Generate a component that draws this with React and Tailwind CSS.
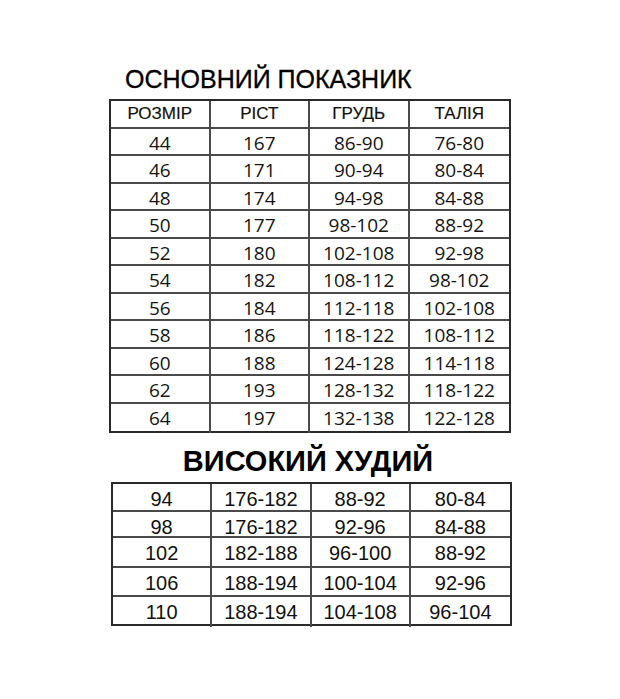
import React from "react";

const mainRows = [
  ["44", "167", "86-90", "76-80"],
  ["46", "171", "90-94", "80-84"],
  ["48", "174", "94-98", "84-88"],
  ["50", "177", "98-102", "88-92"],
  ["52", "180", "102-108", "92-98"],
  ["54", "182", "108-112", "98-102"],
  ["56", "184", "112-118", "102-108"],
  ["58", "186", "118-122", "108-112"],
  ["60", "188", "124-128", "114-118"],
  ["62", "193", "128-132", "118-122"],
  ["64", "197", "132-138", "122-128"],
];
const mainHeights = ["h-[27px]", "h-[28px]", "h-[27px]", "h-[28px]", "h-[27px]", "h-[28px]", "h-[27px]", "h-[28px]", "h-[27px]", "h-[28px]", "h-[27px]"];

const tallRows = [
  ["94", "176-182", "88-92", "80-84"],
  ["98", "176-182", "92-96", "84-88"],
  ["102", "182-188", "96-100", "88-92"],
  ["106", "188-194", "100-104", "92-96"],
  ["110", "188-194", "104-108", "96-104"],
];
const tallHeights = ["h-[28px]", "h-[26px]", "h-[30px]", "h-[29px]", "h-[27px]"];

export default function App() {
  return (
    <div className="w-[620px] h-[699px] bg-white pt-[67px] text-[#111]">
      <div className="ml-[125px] h-[25px] leading-[25px] text-[25px] font-['Liberation_Sans',Arial,sans-serif] text-black whitespace-nowrap [-webkit-text-stroke:0.3px_#000]">
        ОСНОВНИЙ ПОКАЗНИК
      </div>
      <div className="ml-[109px] mt-[7px] w-[402px] border-2 border-[#2a2a2a]">
        <div className="grid grid-cols-4 h-[28px] border-b-2 border-[#4a4a4a] font-['Liberation_Sans',Arial,sans-serif] text-[17px] text-[#111] [-webkit-text-stroke:0.2px_#111]">
          {["РОЗМІР", "РІСТ", "ГРУДЬ", "ТАЛІЯ"].map((h, i) => (
            <div
              key={h}
              className={`flex items-center justify-center ${i < 3 ? "border-r-2 border-[#4a4a4a]" : ""}`}
            >
              {h}
            </div>
          ))}
        </div>
        {mainRows.map((r, ri) => (
          <div
            key={ri}
            className={`grid grid-cols-4 ${mainHeights[ri]} ${ri < mainRows.length - 1 ? "border-b-2 border-[#4a4a4a]" : ""} font-['Open_Sans',sans-serif] font-medium text-[19px] text-[#151515]`}
          >
            {r.map((c, ci) => (
              <div
                key={ci}
                className={`flex items-center justify-center ${ci < 3 ? "border-r-2 border-[#4a4a4a]" : ""}`}
              >
                {c}
              </div>
            ))}
          </div>
        ))}
      </div>

      <div className="mt-[13px] w-[616px] h-[30px] leading-[30px] text-center text-[29px] font-bold font-['Liberation_Sans',Arial,sans-serif] text-black whitespace-nowrap">
        ВИСОКИЙ ХУДИЙ
      </div>
      <div className="ml-[111px] mt-[6px] w-[401px] border-2 border-[#2a2a2a] font-['Liberation_Sans',Arial,sans-serif] text-[20px] text-[#111]">
        {tallRows.map((r, ri) => (
          <div
            key={ri}
            className={`grid grid-cols-4 ${tallHeights[ri]} ${ri < tallRows.length - 1 ? "border-b-2 border-[#4a4a4a]" : ""}`}
          >
            {r.map((c, ci) => (
              <div
                key={ci}
                className={`flex items-center justify-center ${ci < 3 ? "border-r-2 border-[#4a4a4a]" : ""}`}
              >
                {c}
              </div>
            ))}
          </div>
        ))}
      </div>
    </div>
  );
}
